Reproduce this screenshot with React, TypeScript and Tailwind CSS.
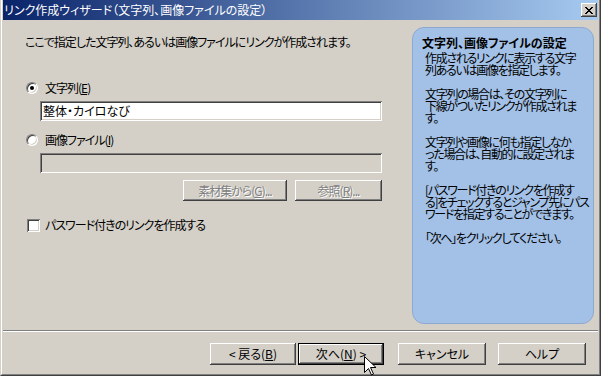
import type { ReactNode } from 'react';

const RAISED =
  'shadow-[inset_-1px_-1px_0_#404040,inset_1px_1px_0_#ffffff,inset_-2px_-2px_0_#808080,inset_2px_2px_0_#d4d0c8]';
const SUNKEN =
  'shadow-[inset_1px_1px_0_#808080,inset_-1px_-1px_0_#ffffff,inset_2px_2px_0_#404040,inset_-2px_-2px_0_#d4d0c8]';

const Radio = ({ checked, children }: { checked?: boolean; children: ReactNode }) => (
  <div className="flex items-center h-[14px] ml-px">
    <span className="w-3 h-3 rounded-full bg-white border border-t-[#808080] border-l-[#808080] border-b-white border-r-white shadow-[inset_1px_1px_0_#404040,inset_-1px_-1px_0_#d4d0c8] flex items-center justify-center">
      {checked && <span className="w-1 h-1 rounded-full bg-black" />}
    </span>
    <span className="ml-[7px] leading-[14px]">{children}</span>
  </div>
);

const Button = ({
  children,
  w,
  disabled,
  isDefault,
}: {
  children: ReactNode;
  w: string;
  disabled?: boolean;
  isDefault?: boolean;
}) => (
  <div
    className={`${w} h-full flex items-center justify-center bg-[#d4d0c8] ${RAISED} ${
      isDefault ? 'border border-black' : ''
    } ${disabled ? 'text-[#808080] [text-shadow:1px_1px_0_#ffffff]' : 'text-black'}`}
  >
    <span className="leading-[14px] whitespace-nowrap">{children}</span>
  </div>
);

const CloseIcon = () => (
  <svg width="8" height="7" viewBox="0 0 8 7" shapeRendering="crispEdges">
    <path
      d="M0 0h2v1h1v1h2V1h1V0h2v1H7v1H6v1H5v1h1v1h1v1h1v1H6V6H5V5H3v1H2v1H0V6h1V5h1V4h1V3H2V2H1V1H0z"
      fill="#000"
    />
  </svg>
);

const Cursor = () => (
  <svg width="12" height="20" viewBox="0 0 12 20" className="absolute left-[364px] top-[356px]">
    <path d="M0.5 0.5v16l4-4 3 6.5 2-1-3-6.5h5.5z" fill="#fff" stroke="#000" strokeWidth="1" />
  </svg>
);

export default function App() {
  return (
    <div className="relative w-[601px] h-[376px] overflow-hidden bg-[#d4d0c8] text-[12px] text-black font-['Noto_Sans_CJK_JP','Noto_Sans',sans-serif] [font-feature-settings:'palt']">
      <div className="h-full flex flex-col border-l border-l-[#d4d0c8] border-r border-r-[#404040] border-b border-b-[#404040]">
        <div className="flex-1 flex flex-col border-l border-l-white border-r border-r-[#808080] border-b border-b-[#808080] px-px">
          {/* title bar */}
          <div className="h-[20px] flex items-center bg-linear-to-r/srgb from-[#0a246a] to-[#a6caf0]">
            <span className="pl-px text-white leading-[14px] whitespace-nowrap">
              リンク作成ウィザード（文字列、画像ファイルの設定）
            </span>
            <div className={`ml-auto mr-px w-[16px] h-[14px] flex items-center justify-center bg-[#d4d0c8] ${RAISED}`}>
              <CloseIcon />
            </div>
          </div>

          <div className="h-[310px] flex tracking-[-1px]">
            {/* left column */}
            <div className="flex-1 flex flex-col pl-[22px]">
              <p className="mt-[15px] leading-[14px] whitespace-nowrap">
                ここで指定した文字列、あるいは画像ファイルにリンクが作成されます。
              </p>

              <div className="mt-[32px]">
                <Radio checked>
                  文字列(<u>E</u>)
                </Radio>
              </div>
              <div className={`mt-[6px] ml-[15px] w-[342px] h-[20px] bg-white ${SUNKEN} flex items-center px-[3px]`}>
                <span className="leading-[14px] tracking-normal">整体・カイロなび</span>
              </div>

              <div className="mt-[12px]">
                <Radio>
                  画像ファイル(<u>I</u>)
                </Radio>
              </div>
              <div className={`mt-[6px] ml-[15px] w-[342px] h-[20px] bg-[#d4d0c8] ${SUNKEN}`} />

              <div className="mt-[7px] ml-[15px] w-[342px] h-[21px] flex justify-end gap-[8px]">
                <Button w="w-[104px]" disabled>
                  素材集から(<u>G</u>)...
                </Button>
                <Button w="w-[87px]" disabled>
                  参照(<u>R</u>)...
                </Button>
              </div>

              <div className="mt-[17px] ml-[2px] flex items-center h-[14px]">
                <span className={`w-[13px] h-[13px] bg-white ${SUNKEN}`} />
                <span className="ml-[5px] leading-[14px]">パスワード付きのリンクを作成する</span>
              </div>
            </div>

            {/* help panel */}
            <div className="mt-[7px] mr-[4px] w-[182px] h-[297px] rounded-[12px] bg-[#a3c1e7] border border-[#8ea9cf] pl-[9px] pt-[8px]">
              <p className="font-bold leading-[14px] whitespace-nowrap tracking-normal">文字列、画像ファイルの設定</p>
              <div className="mt-[2px] pl-[3px] leading-[12px] whitespace-nowrap tracking-[-1.3px]">
                <p>
                  作成されるリンクに表示する文字
                  <br />
                  列あるいは画像を指定します。
                </p>
                <p className="mt-[12px]">
                  文字列の場合は、その文字列に
                  <br />
                  下線がついたリンクが作成されま
                  <br />
                  す。
                </p>
                <p className="mt-[12px]">
                  文字列や画像に何も指定しなか
                  <br />
                  った場合は、自動的に設定されま
                  <br />
                  す。
                </p>
                <p className="mt-[12px]">
                  [パスワード付きのリンクを作成す
                  <br />
                  る]をチェックするとジャンプ先にパス
                  <br />
                  ワードを指定することができます。
                </p>
                <p className="mt-[12px]">「次へ」をクリックしてください。</p>
              </div>
            </div>
          </div>

          {/* separator */}
          <div className="h-[2px] border-t border-t-[#808080] border-b border-b-white" />

          {/* wizard buttons */}
          <div className="pt-[11px] h-[33px] flex justify-end pr-[12px]">
            <Button w="w-[86px]">
              &lt; 戻る(<u>B</u>)
            </Button>
            <div className="w-[2px]" />
            <Button w="w-[86px]" isDefault>
              次へ(<u>N</u>) &gt;
            </Button>
            <div className="w-[14px]" />
            <Button w="w-[88px]">キャンセル</Button>
            <div className="w-[12px]" />
            <Button w="w-[88px]">ヘルプ</Button>
          </div>
        </div>
      </div>
      <Cursor />
    </div>
  );
}
